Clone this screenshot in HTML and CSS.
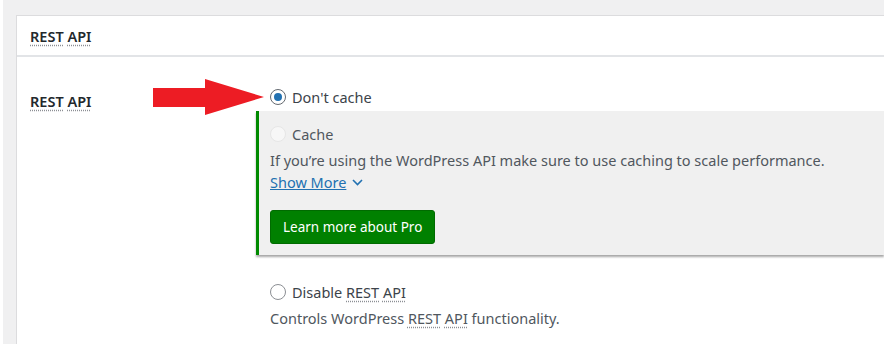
FILE: index.html
```html
<!DOCTYPE html>
<html lang="en">
<head>
  <meta charset="UTF-8">
  <meta name="viewport" content="width=device-width, initial-scale=1.0">
  <title>REST API</title>
  <link rel="stylesheet" href="styles.css">
</head>
<body>
  <div class="frame">
    <div class="panel">
      <div class="panel-head">
        <abbr title="Representational State Transfer">REST</abbr> <abbr title="Application Programming Interface">API</abbr>
      </div>

      <div class="row">
        <div class="row-label">
          <abbr>REST</abbr> <abbr>API</abbr>
        </div>

        <div class="row-field">
          <svg class="arrow" width="112" height="38" viewBox="0 0 112 38">
            <polygon points="0,9 52,9 52,0 111,18 52,36 52,28 0,28" fill="#ed1c24"/>
          </svg>

          <label class="option">
            <span class="radio checked"></span>
            <span>Don't cache</span>
          </label>

          <div class="pro">
            <label class="option faded">
              <span class="radio"></span>
              <span>Cache</span>
            </label>
            <p class="desc">If you’re using the WordPress API make sure to use caching to scale performance.</p>
            <a class="more" href="#">Show More
              <svg width="11" height="7" viewBox="0 0 11 7"><polyline points="1,1 5.5,5.5 10,1" fill="none" stroke="#2271b1" stroke-width="1.6"/></svg>
            </a>
            <div>
              <button class="btn-pro">Learn more about Pro</button>
            </div>
          </div>

          <label class="option disable">
            <span class="radio"></span>
            <span>Disable <abbr>REST</abbr> <abbr>API</abbr></span>
          </label>
          <p class="desc">Controls WordPress <abbr>REST</abbr> <abbr>API</abbr> functionality.</p>
        </div>
      </div>
    </div>
  </div>
</body>
</html>
```

FILE: styles.css
```css
body {
  margin: 0;
  background: #fff;
  font-family: "Noto Sans", "Open Sans", sans-serif;
  font-size: 14.5px;
  line-height: 22px;
  color: #3c434a;
}
.frame {
  background: #f0f0f1;
  margin-left: 3px;
  padding: 15px 0 0 13px;
  height: 329px;
}
.panel {
  background: #fff;
  border: 1px solid #dcdcde;
  border-right: none;
  height: 330px;
}
abbr {
  text-decoration: underline dotted #8c8f94;
  text-underline-offset: 3px;
}
.panel-head {
  height: 39px;
  line-height: 41px;
  padding-left: 13px;
  border-bottom: 2px solid #e2e4e7;
  font-weight: 600;
  color: #23282d;
}
.row {
  display: flex;
  padding-top: 29px;
}
.row-label {
  width: 240px;
  padding: 4px 0 0 13px;
  font-weight: 600;
  color: #23282d;
}
.row-field {
  position: relative;
  flex: 1;
}
.arrow {
  position: absolute;
  left: -117px;
  top: -7px;
}
.option {
  display: flex;
  align-items: center;
  gap: 6px;
  height: 22px;
  color: #3c434a;
}
.radio {
  width: 14px;
  height: 14px;
  border: 1px solid #8c8f94;
  border-radius: 50%;
  background: #fff;
  display: inline-flex;
  align-items: center;
  justify-content: center;
}
.radio.checked {
  border-color: #646970;
}
.radio.checked::after {
  content: "";
  width: 8px;
  height: 8px;
  border-radius: 50%;
  background: #2271b1;
}
.pro {
  margin: 3px 0 0 -14px;
  padding: 12px 0 11px 11px;
  background: #f0f0f0;
  border-left: 3px solid #008a00;
  box-shadow: 0 2px 2px rgba(0, 0, 0, 0.35);
}
.option.faded .radio {
  border-color: #e6e6e6;
  background: #f7f7f7;
}
.option.faded {
  color: #50575e;
}
.desc {
  margin: 4px 0 0;
  color: #50575e;
}
.more {
  display: inline-flex;
  align-items: center;
  gap: 6px;
  color: #2271b1;
  text-decoration: underline;
}
.btn-pro {
  margin-top: 17px;
  height: 34px;
  padding: 0 12px;
  border: 1px solid #006b00;
  border-radius: 3px;
  background: #008000;
  color: #fff;
  font-family: inherit;
  font-size: 13.5px;
}
.disable {
  margin-top: 26px;
}
```
